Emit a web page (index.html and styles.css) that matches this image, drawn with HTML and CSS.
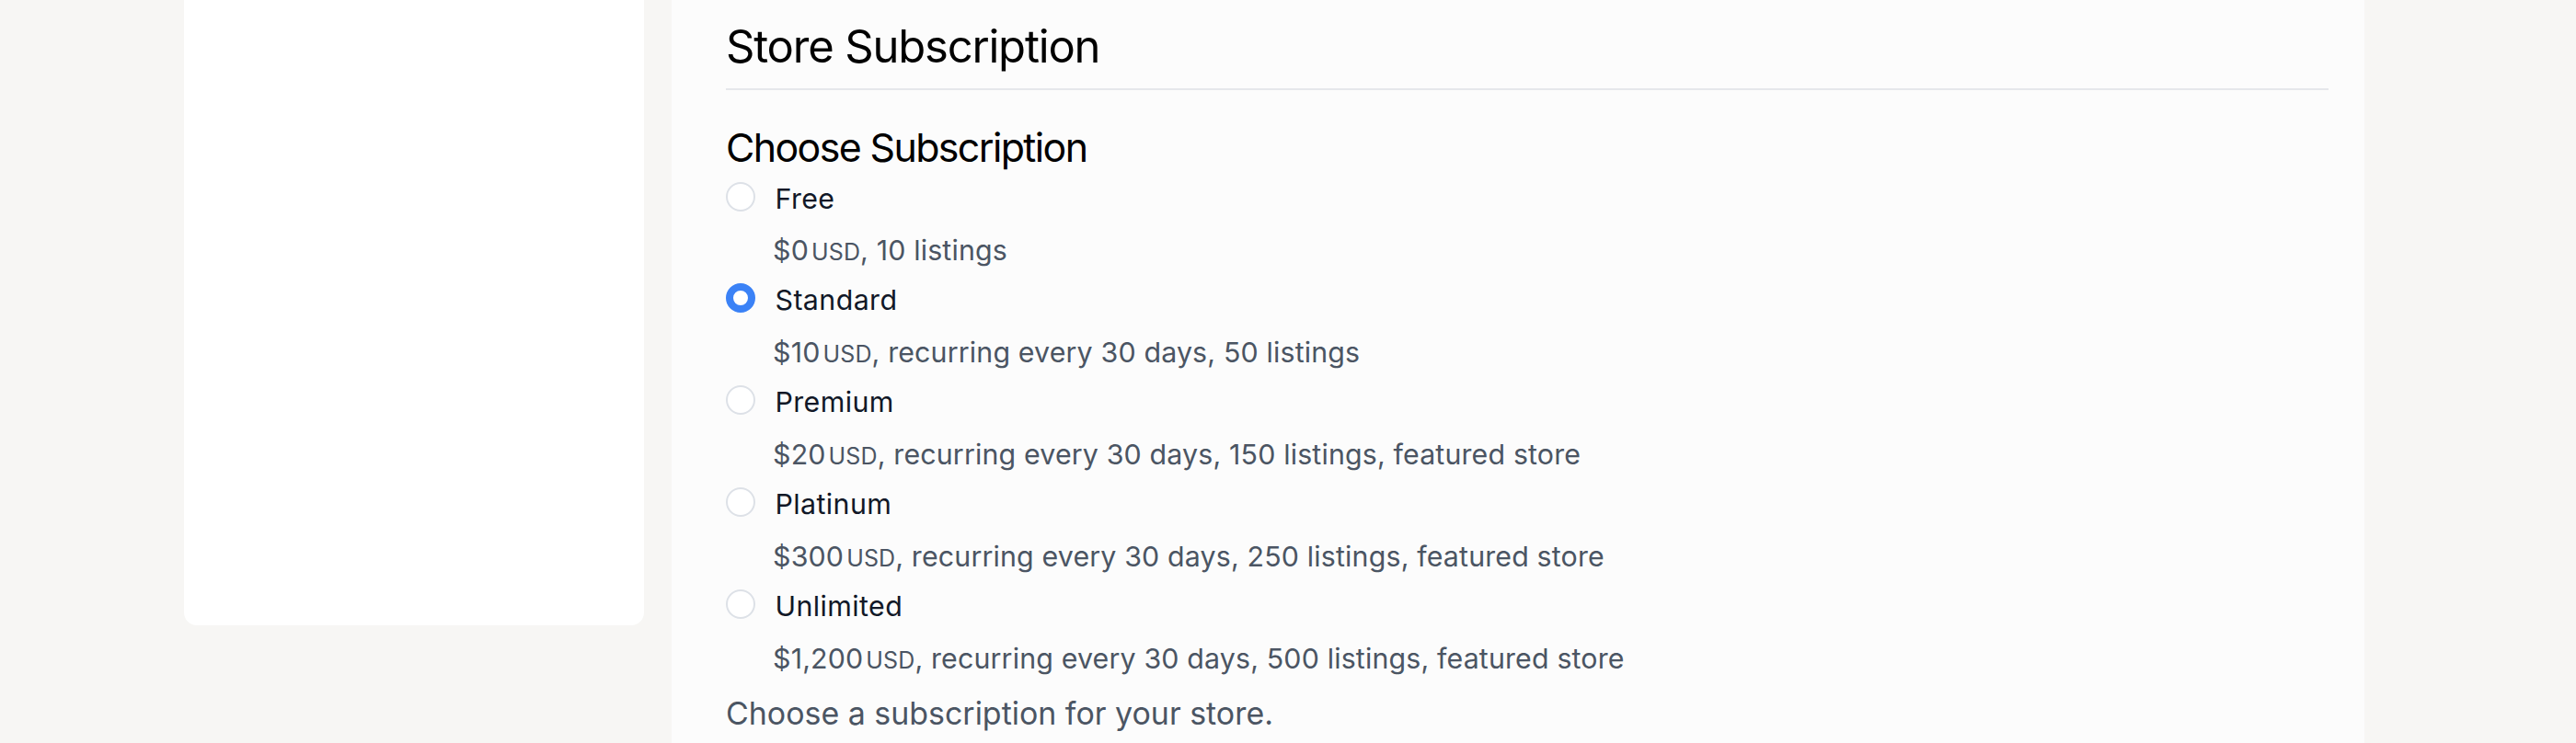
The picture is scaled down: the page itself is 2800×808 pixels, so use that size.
FILE: index.html
```html
<!DOCTYPE html>
<html lang="en">
<head>
<meta charset="utf-8">
<title>Store Subscription</title>
<link rel="stylesheet" href="styles.css">
</head>
<body>
<div class="layout">
  <aside class="sidebar"></aside>
  <main class="panel">
    <h2 class="title">Store Subscription</h2>
    <h3 class="subtitle">Choose Subscription</h3>
    <div class="options">
      <div class="option">
        <label class="option-row"><span class="radio"></span><span class="option-name">Free</span></label>
        <div class="desc">$0<span class="usd">USD</span>, 10 listings</div>
      </div>
      <div class="option">
        <label class="option-row"><span class="radio checked"></span><span class="option-name">Standard</span></label>
        <div class="desc">$10<span class="usd">USD</span>, recurring every 30 days, 50 listings</div>
      </div>
      <div class="option">
        <label class="option-row"><span class="radio"></span><span class="option-name">Premium</span></label>
        <div class="desc">$20<span class="usd">USD</span>, recurring every 30 days, 150 listings, featured store</div>
      </div>
      <div class="option">
        <label class="option-row"><span class="radio"></span><span class="option-name">Platinum</span></label>
        <div class="desc">$300<span class="usd">USD</span>, recurring every 30 days, 250 listings, featured store</div>
      </div>
      <div class="option">
        <label class="option-row"><span class="radio"></span><span class="option-name">Unlimited</span></label>
        <div class="desc">$1,200<span class="usd">USD</span>, recurring every 30 days, 500 listings, featured store</div>
      </div>
    </div>
    <p class="help">Choose a subscription for your store.</p>
  </main>
</div>
</body>
</html>
```

FILE: styles.css
```css
html, body {
  margin: 0;
  padding: 0;
}

body {
  background: #f7f6f4;
  font-family: Inter, "Noto Sans", "Liberation Sans", sans-serif;
  height: 808px;
  overflow: hidden;
}

.layout {
  display: flex;
  align-items: flex-start;
  gap: 30px;
  padding-left: 200px;
}

.sidebar {
  width: 500px;
  height: 680px;
  background: #ffffff;
  border-radius: 0 0 14px 14px;
  flex: none;
}

.panel {
  width: 1840px;
  height: 808px;
  box-sizing: border-box;
  background: #fcfcfc;
  padding: 0 39px 0 59px;
  flex: none;
  overflow: hidden;
}

.title {
  margin: 0;
  padding: 21px 0 15px;
  font-size: 49px;
  line-height: 60px;
  letter-spacing: -1.2px;
  font-weight: 400;
  color: #000000;
  border-bottom: 2px solid #e5e7eb;
}

.subtitle {
  margin: 36px 0 0;
  font-size: 42.86px;
  line-height: 52px;
  letter-spacing: -1.6px;
  font-weight: 400;
  color: #000000;
}

.options {
  margin-top: 9.5px;
  display: flex;
  flex-direction: column;
  gap: 14.4px;
}

.option-row {
  display: flex;
  align-items: center;
  gap: 21.5px;
  height: 40px;
}

.radio {
  width: 32px;
  height: 32px;
  box-sizing: border-box;
  border-radius: 50%;
  border: 2.6px solid #dde1e7;
  background: #ffffff;
  flex: none;
  margin-bottom: 4px;
}

.radio.checked {
  border: 8.5px solid #3b82f6;
  background: #ffffff;
}

.option-name {
  font-size: 30.36px;
  line-height: 40px;
  letter-spacing: 0.4px;
  color: #111827;
}

.desc {
  margin-top: 16.6px;
  padding-left: 51px;
  height: 40px;
  font-size: 30.36px;
  line-height: 40px;
  letter-spacing: 0.15px;
  color: #4b5563;
}

.usd {
  font-size: 25px;
  line-height: 1;
  margin-left: 3px;
}

.help {
  margin: 17.9px 0 0;
  font-size: 33.93px;
  line-height: 44px;
  color: #4b5563;
}
```
